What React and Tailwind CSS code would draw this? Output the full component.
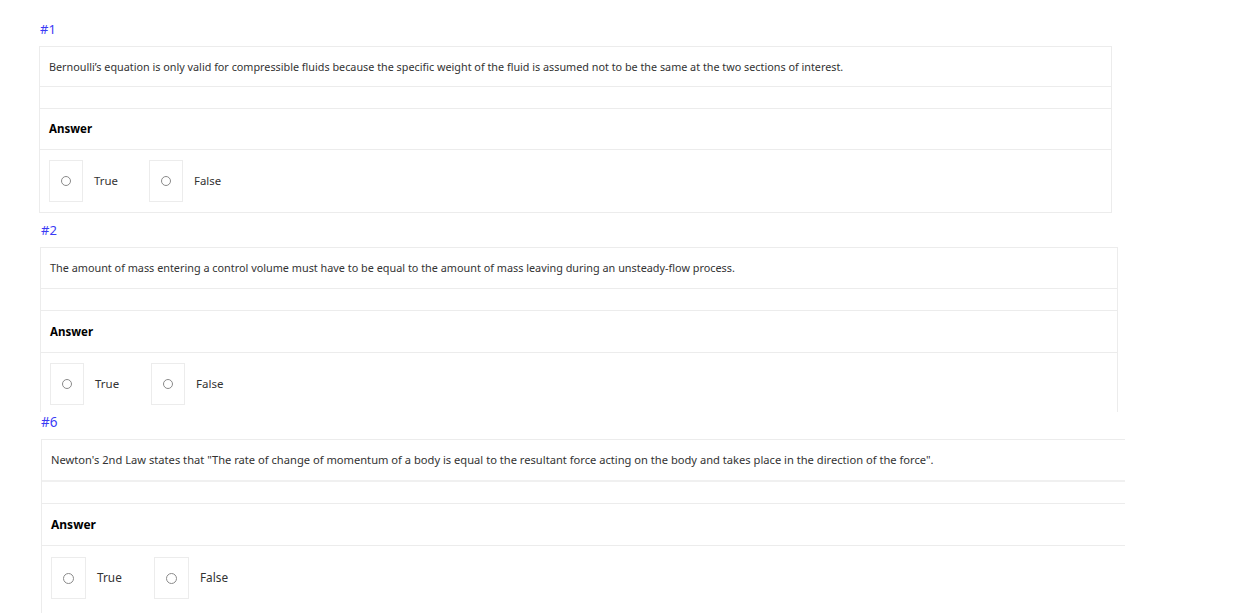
export default function App() {
  const font = { fontFamily: '"Noto Sans", "Open Sans", sans-serif' };
  const Radio = ({ size }) => (
    <span className={`block rounded-full border border-[#8a8a8a] bg-white ${size}`} />
  );
  return (
    <div className="w-[1233px] h-[613px] overflow-hidden bg-white text-[#333]" style={font}>
      {/* Block 1 */}
      <div className="ml-[39px] w-[1073px]">
        <div className="h-[46px] pt-[21px] pl-[1px] text-[13px] leading-[16px] text-[#3b3bf5]">#1</div>
        <div className="border border-[#ececec]">
          <div className="h-[40px] border-b border-[#ececec] pl-[9px] pt-[1px] flex items-center text-[10.8px]">
            Bernoulli’s equation is only valid for compressible fluids because the specific weight of the fluid is assumed not to be the same at the two sections of interest.
          </div>
          <div className="h-[22px] border-b border-[#ececec]" />
          <div className="h-[41px] border-b border-[#ececec] pl-[9px] flex items-center text-[11.5px] font-bold text-black">
            Answer
          </div>
          <div className="h-[62px] pl-[9px] pt-[10px] flex">
            {["True", "False"].map((t) => (
              <div key={t} className="w-[100px] flex items-start">
                <div className="w-[34px] h-[42px] border border-[#ececec] flex items-center justify-center">
                  <Radio size="w-[10px] h-[10px]" />
                </div>
                <span className="ml-[11px] h-[42px] flex items-center text-[11.4px]">{t}</span>
              </div>
            ))}
          </div>
        </div>
      </div>

      {/* Block 2 */}
      <div className="ml-[40px] w-[1078px]">
        <div className="h-[34px] pt-[9px] pl-[1px] text-[13px] leading-[16px] text-[#3b3bf5]">#2</div>
        <div className="border-t border-l border-r border-[#ececec]">
          <div className="h-[41px] border-b border-[#ececec] pl-[9px] flex items-center text-[10.85px]">
            The amount of mass entering a control volume must have to be equal to the amount of mass leaving during an unsteady-flow process.
          </div>
          <div className="h-[22px] border-b border-[#ececec]" />
          <div className="h-[42px] border-b border-[#ececec] pl-[9px] flex items-center text-[11.5px] font-bold text-black">
            Answer
          </div>
          <div className="h-[59px] pl-[9px] pt-[10px] flex">
            {["True", "False"].map((t) => (
              <div key={t} className="w-[101px] flex items-start">
                <div className="w-[34px] h-[42px] border border-[#ececec] flex items-center justify-center">
                  <Radio size="w-[10px] h-[10px]" />
                </div>
                <span className="ml-[11px] h-[42px] flex items-center text-[11.5px]">{t}</span>
              </div>
            ))}
          </div>
        </div>
      </div>

      {/* Block 3 */}
      <div className="ml-[41px] w-[1084px]">
        <div className="h-[27px] pt-[2px] text-[13.5px] leading-[16px] text-[#3b3bf5]">#6</div>
        <div className="border-t border-l border-[#ececec]">
          <div className="h-[42px] border-b-2 border-[#f0f0f0] pl-[9px] flex items-center text-[11.15px]">
            Newton's 2nd Law states that "The rate of change of momentum of a body is equal to the resultant force acting on the body and takes place in the direction of the force".
          </div>
          <div className="h-[22px] border-b border-[#ececec]" />
          <div className="h-[42px] border-b border-[#ececec] pl-[9px] flex items-center text-[12px] font-bold text-black">
            Answer
          </div>
          <div className="h-[80px] pl-[9px] pt-[11px] flex">
            {["True", "False"].map((t) => (
              <div key={t} className="w-[103px] flex items-start">
                <div className="w-[35px] h-[42px] border border-[#ececec] flex items-center justify-center">
                  <Radio size="w-[11px] h-[11px]" />
                </div>
                <span className="ml-[11px] h-[42px] flex items-center text-[11.8px]">{t}</span>
              </div>
            ))}
          </div>
        </div>
      </div>
    </div>
  );
}
